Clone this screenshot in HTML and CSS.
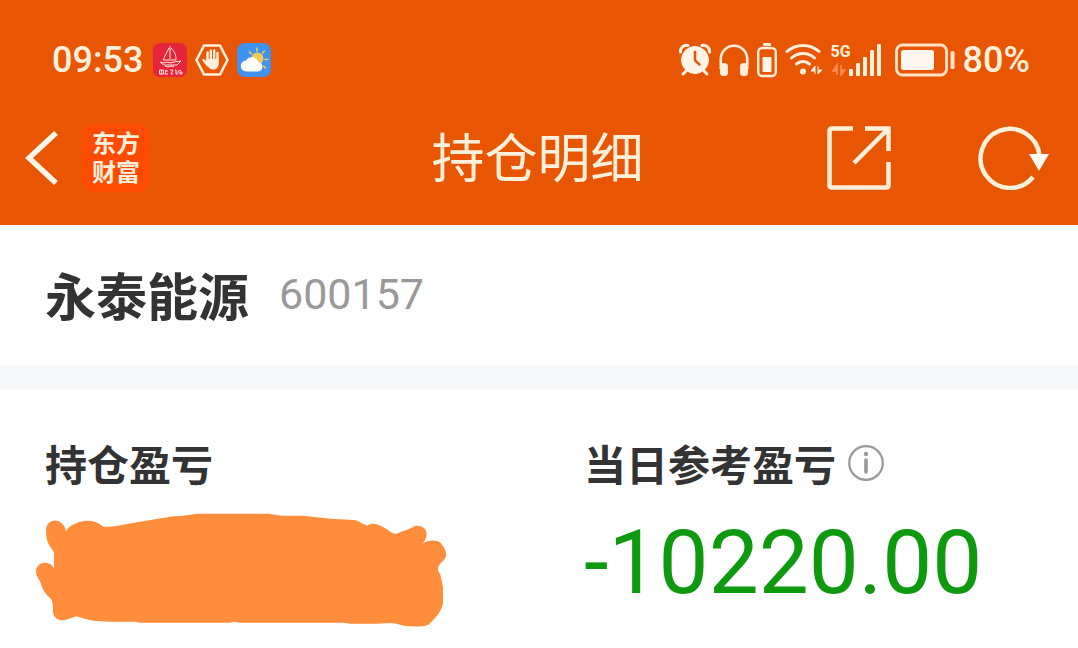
FILE: index.html
```
<!DOCTYPE html>
<html lang="zh-CN">
<head>
  <meta charset="UTF-8">
  <meta name="viewport" content="width=device-width, initial-scale=1.0">
  <title>持仓明细</title>
  <link rel="stylesheet" href="styles.css">
</head>
<body>
  <header class="header">
    <div class="status-bar">
      <div class="status-left">
        <span class="time">09:53</span>
        <svg width="34" height="34" viewBox="0 0 34 34">
          <rect width="34" height="34" rx="7" fill="#e8243a"/>
          <g fill="none" stroke="#ffe9e0" stroke-width="1">
            <path d="M17 3v15M16 5L10 17h6M18 5c4 4 5 7 5 12h-5M7 19l4 1 3-1 3 1 4-1 7-1-4 4H11l-3-2M12 23l3 1 3-1 3 1"/>
            <path d="M6.500 27h4v4h-4zM8.500 27v4M12 28h3M13 27l-1 4h3M17 27h3l-2 4h2M22 27h1v4h2M24 29h2M26 27v1l2-1M27 29v2h2v-2z"/>
          </g>
        </svg>
        <svg width="34" height="34" viewBox="0 0 34 34">
          <path d="M9 2.500h16l7.500 14.500L25 31.500H9L1.500 17z" fill="none" stroke="#fff0dc" stroke-width="2.600" stroke-linejoin="round"/>
          <g stroke="#fff0dc" stroke-width="2.400" stroke-linecap="round" fill="none">
            <path d="M12.500 18V9.500M15.800 17V7.500M19.200 17V7.500M22.500 18v-8M8.500 17l4 5"/>
          </g>
          <path d="M11.200 16h12.600v4c0 4-2 6.500-5.300 6.500-3.500 0-5-1.500-7.300-5z" fill="#fff0dc"/>
        </svg>
        <svg width="34" height="34" viewBox="0 0 34 34">
          <rect width="34" height="34" rx="8" fill="#3f92f0"/>
          <path d="M20 5v3M12.500 9l2 2M27.500 8l-2 2M28 16.500h3M26.500 23l2 2" stroke="#f3d15c" stroke-width="1.500" stroke-linecap="round"/>
          <circle cx="20.500" cy="15.500" r="6" fill="#f3ca55"/>
          <path d="M9.500 28.500a5.500 5.500 0 0 1-.5-11 7 7 0 0 1 12.500 1.500 4.800 4.800 0 0 1-.5 9.500z" fill="#fffdf6"/>
        </svg>
      </div>
      <div class="status-right">
        <svg width="32" height="34" viewBox="0 0 32 34">
          <g fill="#fff4e6" stroke="#fff4e6">
            <circle cx="16" cy="17" r="13.500"/>
            <path d="M7 28l-3 3M25 28l3 3" stroke-width="3" stroke-linecap="round"/>
            <path d="M1.500 9A6 6 0 0 1 9 2.500M30.500 9A6 6 0 0 0 23 2.500" fill="none" stroke-width="3" stroke-linecap="round"/>
          </g>
          <path d="M16 9v8.500l4.500 4" fill="none" stroke="#e85604" stroke-width="2.500" stroke-linecap="round"/>
        </svg>
        <svg width="30" height="34" viewBox="0 0 30 34">
          <path d="M1.800 26V16a13.200 13.200 0 0 1 26.400 0v10" fill="none" stroke="#fff0dc" stroke-width="2.600"/>
          <rect x="1" y="20" width="8" height="13" rx="3.500" fill="#fff0dc"/>
          <rect x="21" y="20" width="8" height="13" rx="3.500" fill="#fff0dc"/>
        </svg>
        <svg width="20" height="36" viewBox="0 0 20 36">
          <rect x="6" y="1" width="8" height="3" rx="1" fill="#fff0dc"/>
          <rect x="1.200" y="6" width="17.600" height="28" rx="4" fill="none" stroke="#fff0dc" stroke-width="2.400"/>
          <rect x="5.500" y="15" width="9" height="15" rx="1" fill="#fff4e6"/>
        </svg>
        <svg width="38" height="34" viewBox="0 0 38 34">
          <g fill="none" stroke="#fff0dc" stroke-width="3" stroke-linecap="round">
            <path d="M2 8.500a24 24 0 0 1 32 0M6.500 15a17 17 0 0 1 23 0M11.500 21a10 10 0 0 1 13 0"/>
          </g>
          <circle cx="18" cy="28.500" r="3" fill="#fff0dc"/>
          <path d="M30 31v-8l-4 5h4M33 23v8l4-4h-4" fill="#fff0dc" stroke="#fff0dc"/>
        </svg>
        <div class="signal">
          <span class="network">5G</span>
          <svg width="52" height="32" viewBox="0 0 52 32">
            <path d="M6 31V21l-4 6h4M10 21v10l4-5h-4" fill="#ff8b4f" stroke="#ff8b4f" stroke-width="1.600"/>
            <g fill="#fff0dc">
              <rect x="18" y="25" width="4" height="7" rx="1"/>
              <rect x="25" y="19" width="4" height="13" rx="1"/>
              <rect x="32" y="13" width="4" height="19" rx="1"/>
              <rect x="39" y="6" width="4" height="26" rx="1"/>
              <rect x="46" y="0" width="4" height="32" rx="1"/>
            </g>
          </svg>
        </div>
        <svg width="60" height="34" viewBox="0 0 60 34">
          <rect x="1.500" y="2" width="50" height="30" rx="6" fill="none" stroke="#ffe3c8" stroke-width="2.800"/>
          <rect x="6" y="7" width="33" height="20" rx="2.500" fill="#fff6f0"/>
          <rect x="55.500" y="8" width="4" height="18" rx="1.500" fill="#ffe3c8"/>
        </svg>
        <span class="percent">80%</span>
      </div>
    </div>

    <nav class="nav">
      <div class="nav-left">
        <button class="icon-btn" aria-label="返回">
          <svg width="34" height="56" viewBox="0 0 34 56">
            <path d="M31 3L4 28l27 25" fill="none" stroke="#fff6ea" stroke-width="5.500"/>
          </svg>
        </button>
        <a class="logo" href="#">东方<br>财富</a>
      </div>
      <h1 class="title">持仓明细</h1>
      <div class="nav-right">
        <button class="icon-btn" aria-label="分享">
          <svg width="64" height="64" viewBox="0 0 64 64">
            <path d="M26 2.500H4.500a2 2 0 0 0-2 2v55a2 2 0 0 0 2 2h55a2 2 0 0 0 2-2V36M38 2.500h23.500V25M61 3L27 37" fill="none" stroke="#fff0dc" stroke-width="4.500"/>
          </svg>
        </button>
        <button class="icon-btn" aria-label="刷新">
          <svg width="72" height="64" viewBox="0 0 72 64">
            <path d="M55 51A29.500 29.500 0 1 1 61.500 30" fill="none" stroke="#fff0dc" stroke-width="4.500"/>
            <path d="M51 28h20L61 45z" fill="#fffaf2"/>
          </svg>
        </button>
      </div>
    </nav>
  </header>

  <main>
    <section class="stock">
      <h2 class="stock-name">永泰能源</h2>
      <span class="stock-code">600157</span>
    </section>

    <section class="summary">
      <div class="item">
        <h3 class="label">持仓盈亏</h3>
        <svg class="scribble" width="412" height="115" viewBox="45 40 1236 345">
          <path d="M78 92C78 54 130 50 138 95C150 75 165 74 175 68C200 60 225 60 250 81C280 82 300 77 320 73L460 50C490 49 510 45 530 42H745L785 48H850L930 57L1003 61C1020 65 1028 74 1042 78C1058 66 1075 74 1090 83C1105 91 1112 101 1128 103C1145 94 1165 91 1185 79C1222 74 1230 110 1207 132C1225 122 1245 118 1262 130C1270 142 1280 150 1278 170C1276 184 1252 190 1254 213C1266 228 1264 245 1269 262V312C1262 340 1245 355 1228 373C1215 384 1180 380 1160 380C1140 376 1130 371 1110 370L1070 372H990L970 369H660L643 366L630 369H360L345 366H265L220 363C200 360 185 355 170 350L135 361C112 366 96 350 99 325C97 310 100 305 87 292C60 265 68 255 57 240C50 228 45 216 50 205C60 182 95 185 102 208V160C96 142 78 138 78 92Z" fill="#ff8d3b"/>
        </svg>
      </div>
      <div class="item">
        <div class="label-row">
          <h3 class="label">当日参考盈亏</h3>
          <button class="icon-btn" aria-label="说明">
            <svg width="36" height="36" viewBox="0 0 36 36">
              <circle cx="18" cy="18" r="16.800" fill="none" stroke="#999" stroke-width="2.200"/>
              <circle cx="18" cy="9" r="2.200" fill="#999"/>
              <path d="M18 15v12" stroke="#999" stroke-width="3.600" stroke-linecap="round"/>
            </svg>
          </button>
        </div>
        <p class="amount">-10220.00</p>
      </div>
    </section>
  </main>
</body>
</html>
```
FILE: styles.css
```
* {
  box-sizing: border-box;
}

body {
  margin: 0;
  background-color: #fff;
  color: #333;
  font-family: "Noto Sans CJK SC", sans-serif;
}

h1, h2, h3, p {
  margin: 0;
}

svg {
  display: block;
  flex-shrink: 0;
}

.header {
  background-color: #e85604;
  color: #fff0dc;
  padding: 30px 0;
}

.status-bar {
  display: flex;
  justify-content: space-between;
  align-items: center;
  height: 60px;
  padding: 0 48px 0 52px;
}

.status-left,
.status-right {
  display: flex;
  align-items: center;
  gap: 8px;
}

.time,
.percent,
.network,
.stock-code,
.amount {
  font-family: "Roboto", sans-serif;
}

.time {
  font-size: 36px;
  line-height: 40px;
  font-weight: 500;
  margin-right: 2px;
}

.signal {
  position: relative;
  margin-right: 4px;
}

.network {
  position: absolute;
  top: 0;
  left: 0;
  font-size: 16px;
  line-height: 16px;
  font-weight: 700;
}

.percent {
  font-size: 36px;
  line-height: 40px;
  font-weight: 500;
}

.nav {
  display: grid;
  grid-template-columns: 1fr auto 1fr;
  align-items: center;
  margin-top: 30px;
  height: 75px;
  padding: 0 28px 0 25px;
}

.nav-left {
  display: flex;
  align-items: center;
  gap: 23px;
}

.nav-right {
  display: flex;
  justify-content: flex-end;
  align-items: center;
  gap: 87px;
}

.icon-btn {
  padding: 0;
  border: none;
  background: none;
  cursor: pointer;
}

.logo {
  width: 68px;
  height: 68px;
  padding-top: 3px;
  border-radius: 12px;
  background-color: #ff4a02;
  color: #fff0dc;
  font-size: 24px;
  line-height: 29px;
  font-weight: 700;
  text-align: center;
  text-decoration: none;
}

.title {
  padding-bottom: 5px;
  font-size: 53px;
  line-height: 60px;
  font-weight: 400;
}

.stock {
  display: flex;
  align-items: center;
  gap: 30px;
  height: 140px;
  padding: 0 0 2px 45px;
}

.stock-name {
  font-size: 51px;
  line-height: 60px;
  font-weight: 700;
}

.stock-code {
  color: #999;
  font-size: 43px;
  line-height: 60px;
  font-weight: 400;
}

.summary {
  display: grid;
  grid-template-columns: 1fr 1fr;
  border-top: 24px solid #f6f8fa;
  padding-top: 48px;
}

.item {
  padding-left: 45px;
}

.label-row {
  display: flex;
  align-items: center;
  gap: 12px;
}

.label {
  font-size: 42px;
  line-height: 52px;
  font-weight: 700;
}

.scribble {
  margin: 24px 0 0 -10px;
}

.amount {
  color: #0f990f;
  font-size: 89px;
  line-height: 100px;
  margin-top: 24px;
}
```
